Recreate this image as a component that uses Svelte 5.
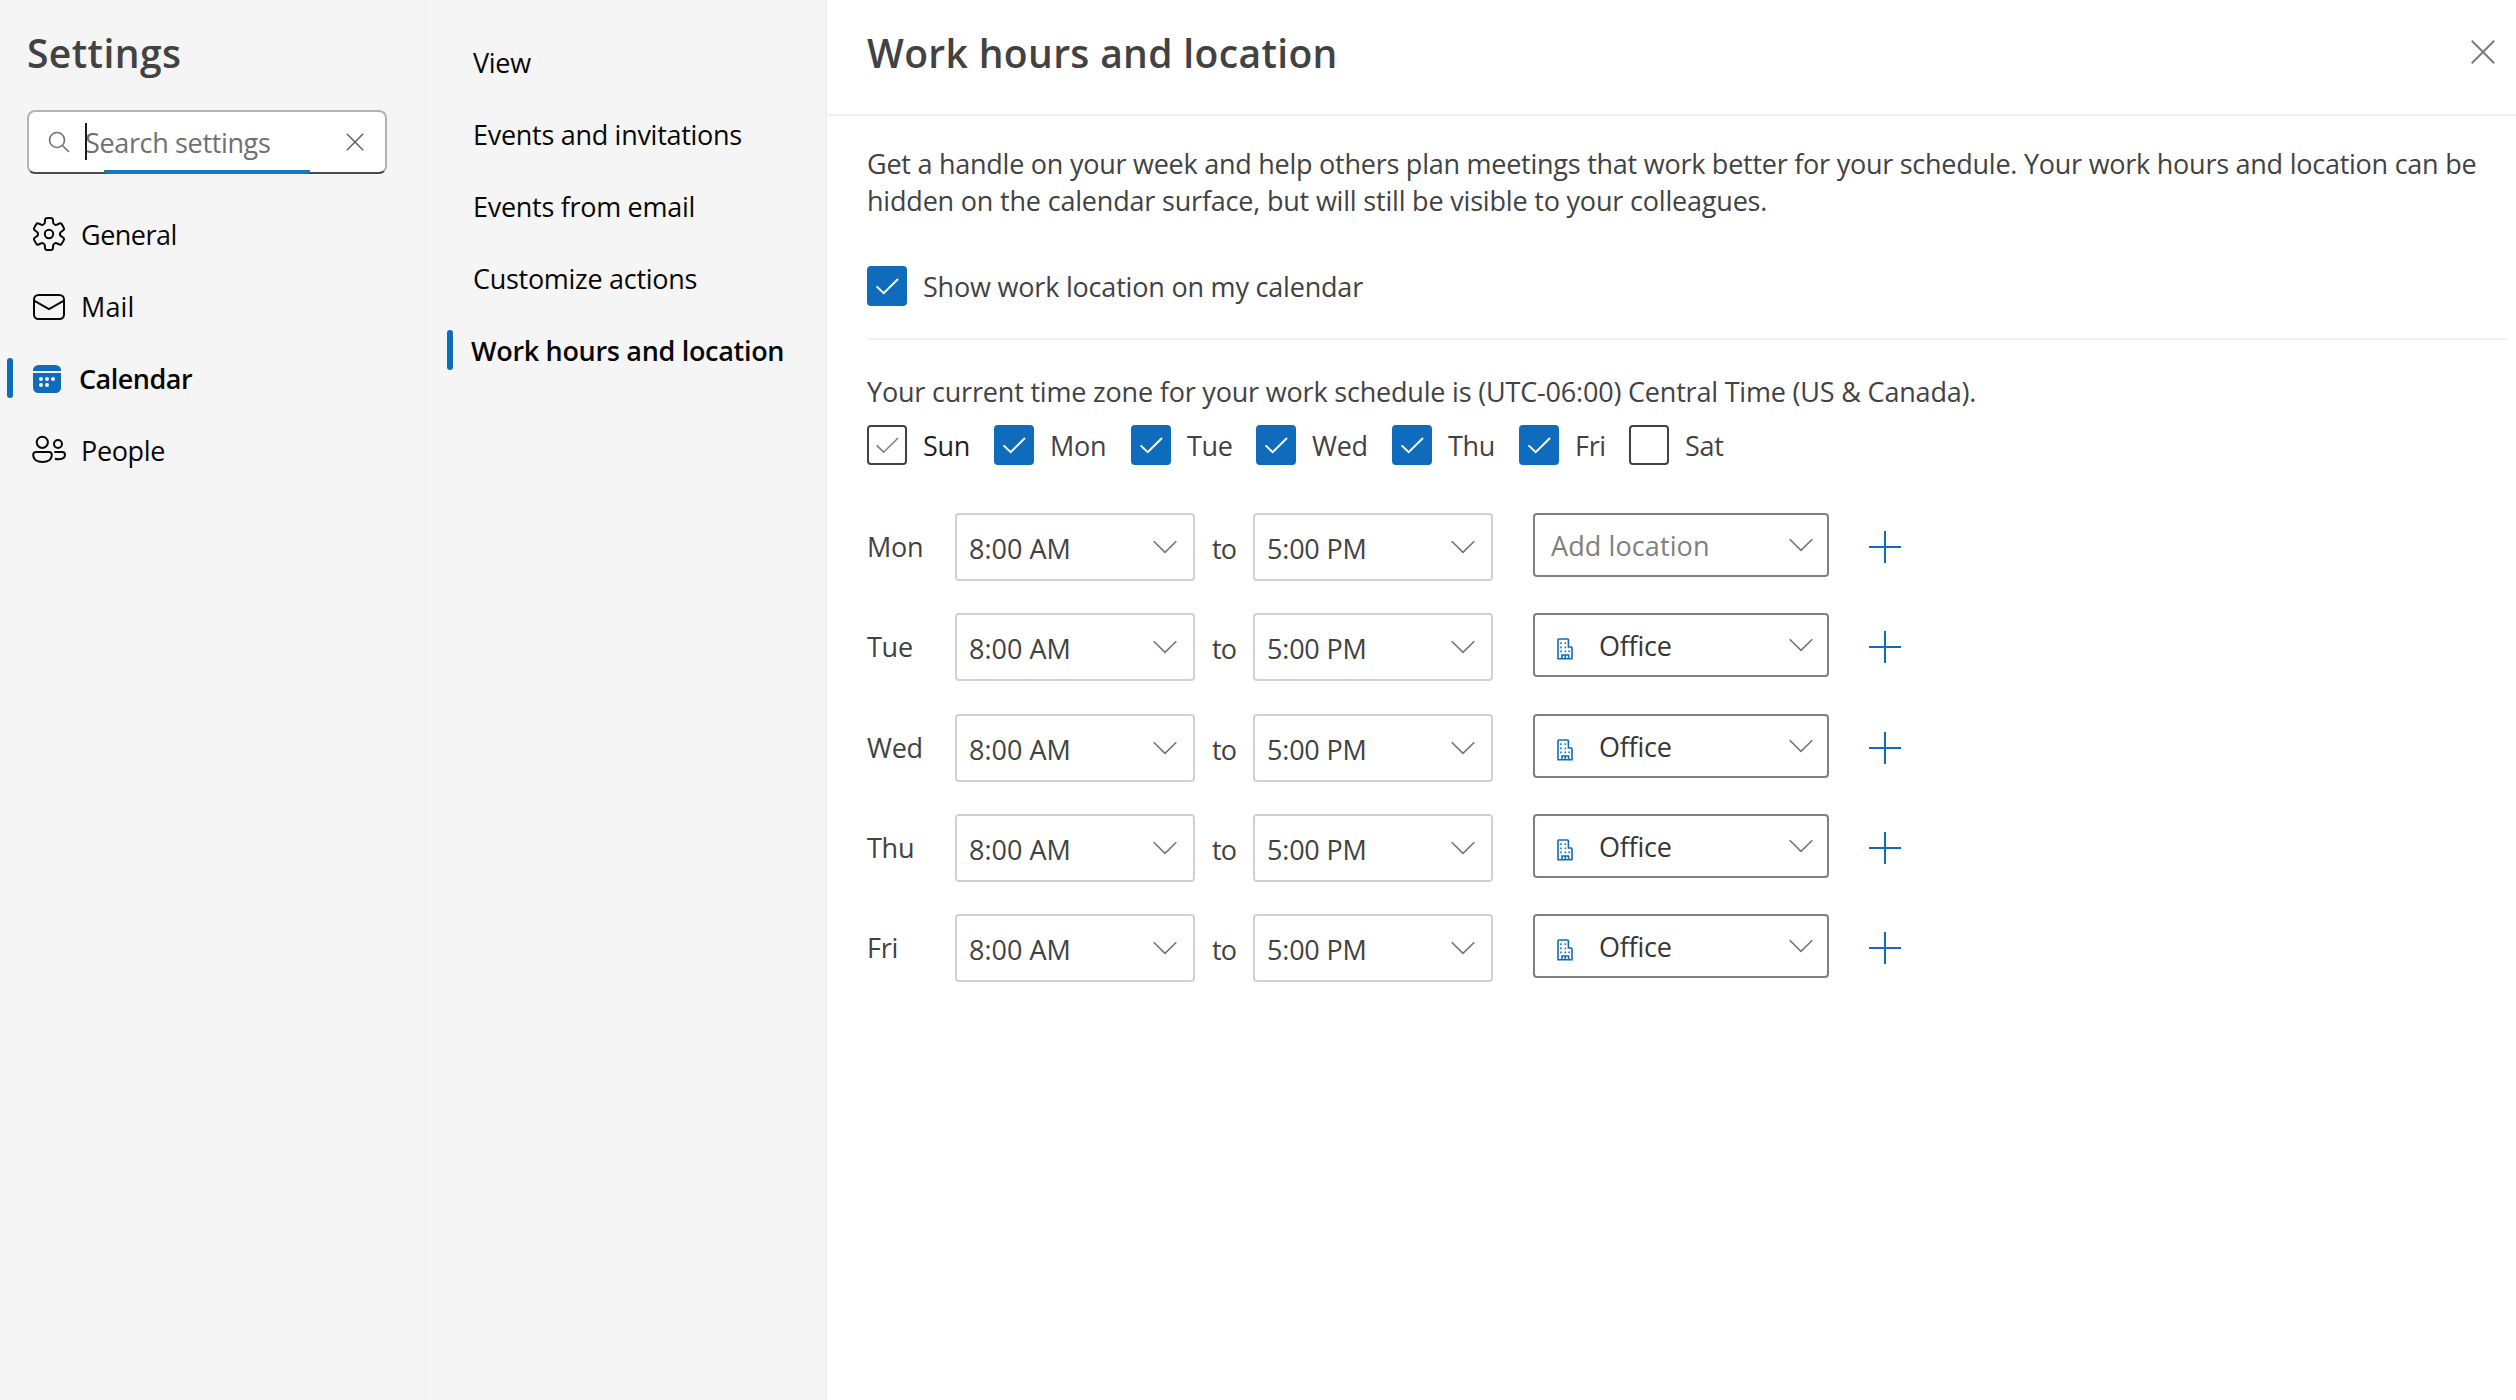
<script>
  const sections = [
    { label: 'General', icon: 'gear' },
    { label: 'Mail', icon: 'mail' },
    { label: 'Calendar', icon: 'calendar', active: true },
    { label: 'People', icon: 'people' }
  ];
  const pages = [
    { label: 'View' },
    { label: 'Events and invitations' },
    { label: 'Events from email' },
    { label: 'Customize actions' },
    { label: 'Work hours and location', active: true }
  ];
  const days = [
    { name: 'Sun', state: 'hover' },
    { name: 'Mon', state: 'on' },
    { name: 'Tue', state: 'on' },
    { name: 'Wed', state: 'on' },
    { name: 'Thu', state: 'on' },
    { name: 'Fri', state: 'on' },
    { name: 'Sat', state: 'off' }
  ];
  const schedule = [
    { day: 'Mon', location: null },
    { day: 'Tue', location: 'Office' },
    { day: 'Wed', location: 'Office' },
    { day: 'Thu', location: 'Office' },
    { day: 'Fri', location: 'Office' }
  ];

  // Six-toothed gear centred in a 34x34 box.
  function gearPath() {
    const at = (deg, r) => {
      const a = ((deg - 90) * Math.PI) / 180;
      return `${(17 + r * Math.cos(a)).toFixed(2)} ${(17 + r * Math.sin(a)).toFixed(2)}`;
    };
    let d = `M${at(-11, 16)}`;
    for (let k = 0; k < 360; k += 60) {
      d += `Q${at(k, 16.3)} ${at(k + 11, 16)}Q${at(k + 15, 15.6)} ${at(k + 16, 14.5)}`;
      d += `L${at(k + 19, 12.6)}Q${at(k + 22, 10.8)} ${at(k + 30, 11.1)}Q${at(k + 38, 10.8)} ${at(k + 41, 12.6)}`;
      d += `L${at(k + 44, 14.5)}Q${at(k + 45, 15.6)} ${at(k + 49, 16)}`;
    }
    return d + 'Z';
  }
  const gear = gearPath();
</script>

{#snippet check()}
  <svg class="tick" viewBox="0 0 40 40"><path d="M9.6 20.4 16.7 27.2 31 13" /></svg>
{/snippet}

{#snippet chevron()}
  <svg class="chevron" viewBox="0 0 24 14"><path d="M.7 1.2 12 12.4 23.3 1.2" /></svg>
{/snippet}

<div class="app">
  <aside class="sections">
    <h1>Settings</h1>
    <div class="search">
      <svg class="lens" viewBox="0 0 22 22"><circle cx="9" cy="9" r="7.5" /><path d="M14.2 14.2 21 21" /></svg>
      <span class="field"><i class="caret"></i>Search settings</span>
      <svg class="clear" viewBox="0 0 18 18"><path d="M.8.8 17.2 17.2M17.2.8.8 17.2" /></svg>
      <span class="focus"></span>
    </div>
    <nav>
      {#each sections as s}
        <a class="row {s.icon}" class:active={s.active}>
          <svg class="icon" viewBox="0 0 34 34">
            {#if s.icon === 'gear'}
              <path d={gear} /><circle cx="17" cy="17" r="4.2" />
            {:else if s.icon === 'mail'}
              <rect x="2" y="5" width="30" height="24" rx="4.5" /><path d="M2.5 10.8 17 19 31.5 10.8" />
            {:else if s.icon === 'calendar'}
              <path class="solid" d="M1 7V6.5A5.5 5.5 0 0 1 6.5 1H23.5A5.5 5.5 0 0 1 29 6.5V7ZM1 9H29V23.5A5.5 5.5 0 0 1 23.5 29H6.5A5.5 5.5 0 0 1 1 23.5Z" />
              {#each [[9, 15], [15, 15], [21, 15], [9, 21], [15, 21]] as [x, y]}
                <circle class="hole" cx={x} cy={y} r="2" />
              {/each}
            {:else}
              <circle cx="10.3" cy="9.3" r="5.6" /><circle cx="26" cy="11" r="4" />
              <path d="M4 19H17a2.8 2.8 0 0 1 2.8 2.8C19.8 26.5 16 29 10.5 29S1.2 26.5 1.2 21.8A2.8 2.8 0 0 1 4 19ZM22.3 19H30.2a2.8 2.8 0 0 1 2.8 2.8C33 25 30 26.2 26.8 26.2 25.2 26.2 24 26 22.9 25.7" />
            {/if}
          </svg>
          <span>{s.label}</span>
        </a>
      {/each}
    </nav>
  </aside>

  <nav class="pages">
    {#each pages as p}
      <a class="row" class:active={p.active}>{p.label}</a>
    {/each}
  </nav>

  <main>
    <header>
      <h1>Work hours and location</h1>
      <svg class="close" viewBox="0 0 24 24"><path d="M.8.8 23.2 23.2M23.2.8.8 23.2" /></svg>
    </header>
    <div class="body">
      <p class="intro">
        <span>Get a handle on your week and help others plan meetings that work better for your schedule. Your work hours and location can be</span>
        <span class="second">hidden on the calendar surface, but will still be visible to your colleagues.</span>
      </p>
      <label class="option show"><span class="box on">{@render check()}</span>Show work location on my calendar</label>
      <p class="zone">Your current time zone for your work schedule is (UTC-06:00) Central Time (US &amp; Canada).</p>
      <div class="days">
        {#each days as d}
          <label class="option {d.state}">
            <span class="box {d.state}">{#if d.state !== 'off'}{@render check()}{/if}</span>{d.name}
          </label>
        {/each}
      </div>
      <div class="schedule">
        {#each schedule as r}
          <div class="entry">
            <span class="day">{r.day}</span>
            <div class="select time"><span>8:00 AM</span>{@render chevron()}</div>
            <span class="to">to</span>
            <div class="select time pm"><span>5:00 PM</span>{@render chevron()}</div>
            <div class="select place" class:empty={!r.location}>
              {#if r.location}
                <svg class="office" viewBox="0 0 16 22">
                  <path d="M1 20.8V1.8Q1 1 1.8 1H10.6Q11.4 1 11.4 1.8V9H14.2Q15 9 15 9.8V20.8ZM5 20.8V17H11.6V20.8M8.3 17V20.8" />
                  <path class="dots" d="M3.2 5.2h1.5M7.6 5.2h1.5M3.2 9.3h1.5M7.6 9.3h1.5M3.2 13.4h1.5M7.6 13.4h1.5M11.4 13.4h1.5" />
                </svg>
              {/if}
              <span>{r.location ?? 'Add location'}</span>{@render chevron()}
            </div>
            <svg class="plus" viewBox="0 0 32 32"><path d="M16 0V32M0 16H32" /></svg>
          </div>
        {/each}
      </div>
    </div>
  </main>
</div>

<style>
  :global(body) { margin: 0; background: #fff; }
  .app {
    display: grid;
    grid-template-columns: 427px 400px 1fr;
    height: 1400px;
    font: 27px/37px "Open Sans", "Noto Sans", sans-serif;
    letter-spacing: -0.25px;
    color: #424242;
  }
  svg { display: block; flex: none; fill: none; stroke: currentColor; stroke-width: 2; }
  h1, p { margin: 0; }
  h1 { font-size: 39px; line-height: 52px; font-weight: 600; letter-spacing: 0.35px; }

  .sections, .pages { box-sizing: border-box; background: #f5f5f5; border-right: 2px solid #f0f0f0; }
  .sections { padding: 27px 38px 0 0; }
  .sections h1 { padding-left: 27px; letter-spacing: 0.42px; }
  .search {
    position: relative;
    box-sizing: border-box;
    display: flex;
    align-items: center;
    height: 64px;
    margin: 31px 0 24px 27px;
    padding: 0 21px 0 19px;
    width: 360px;
    background: #fff;
    border: 2px solid #b3b3b3;
    border-bottom-color: #4a4a4a;
    border-radius: 8px;
    color: #707070;
  }
  .lens { width: 22px; height: 22px; stroke-width: 1.6; }
  .field { position: relative; flex: 1; margin-left: 15px; padding-top: 1px; letter-spacing: -0.35px; }
  .caret { position: absolute; left: 0; top: 0; width: 2px; height: 37px; background: #1b1b1b; }
  .clear { width: 18px; height: 18px; stroke-width: 1.5; color: #616161; }
  .focus {
    position: absolute;
    left: 75px;
    bottom: -2px;
    width: 206px;
    height: 4px;
    background: #1a75c9;
    border-radius: 0 0 4px 4px / 0 0 3px 3px;
  }

  .row { position: relative; display: flex; align-items: center; height: 72px; color: #080808; }
  .sections .row { padding-left: 32px; letter-spacing: -0.5px; }
  .icon { width: 34px; height: 34px; margin-right: 15px; }
  .mail .icon { margin: 1px 15px 0 0; }
  .sections .row.mail { letter-spacing: 0.1px; }
  .row.calendar .icon { margin: 6px 13px 0 0; color: #0f6cbd; }
  .sections .row.people { letter-spacing: -0.35px; }
  .solid { fill: currentColor; stroke: none; }
  .hole { fill: #f5f5f5; stroke: none; }
  .active { font-weight: 600; }
  .active::before {
    content: "";
    position: absolute;
    left: 7px;
    top: 16px;
    width: 6px;
    height: 40px;
    border-radius: 3px;
    background: #0f6cbd;
  }
  .pages { padding: 26px 0 0 20px; }
  .pages .row { padding-left: 26px; letter-spacing: -0.29px; }
  .pages .row.active { padding-left: 24px; letter-spacing: -0.31px; }
  .pages .active::before { left: 0; }

  header {
    box-sizing: border-box;
    display: flex;
    justify-content: space-between;
    height: 116px;
    padding: 27px 21px 0 40px;
    border-bottom: 2px solid #f0f0f0;
  }
  .close { width: 24px; height: 24px; margin-top: 13px; color: #7b7b7b; }
  .body { padding: 29px 9px 0 40px; }
  .intro span { display: block; white-space: nowrap; }
  .intro .second { letter-spacing: -0.19px; }
  .option { display: flex; align-items: center; gap: 16px; }
  .show { height: 40px; padding: 47px 0 32px; border-bottom: 2px solid #f0f0f0; letter-spacing: -0.2px; }
  .box { box-sizing: border-box; display: grid; width: 40px; height: 40px; flex: none; border: 2px solid #424242; border-radius: 4px; }
  .box.on { background: #0f6cbd; border-color: #0f6cbd; color: #fff; }
  .box.hover { color: #808080; }
  .tick { width: 40px; height: 40px; margin: -2px; }
  .box.hover .tick { stroke-width: 1.6; }
  .zone { padding-top: 33px; letter-spacing: -0.19px; }
  .days { display: grid; grid-template-columns: 127px 137px 125px 136px 127px 110px 100px; margin-top: 15px; letter-spacing: -0.3px; }
  .option.hover { color: #1f1f1f; }

  .schedule { display: grid; grid-auto-rows: 100.3px; margin-top: 48px; }
  .entry { display: grid; grid-template-columns: 88px 240px 58px 240px 296px 32px; align-items: start; }
  .day { line-height: 67px; }
  .to { line-height: 71px; padding-left: 17px; letter-spacing: -0.8px; }
  .select {
    box-sizing: border-box;
    display: flex;
    align-items: center;
    justify-content: space-between;
    border: 2px solid #d1d1d1;
    border-radius: 4px;
  }
  .time { height: 68px; padding: 0 16px 0 12px; }
  .time span { padding-top: 3px; letter-spacing: 0; }
  .pm span { letter-spacing: -0.2px; }
  .place { height: 64px; margin-left: 40px; padding: 0 14px 0 16px; width: 296px; border-color: #808080; }
  .place span { flex: 1; padding-top: 1px; }
  .entry .place { color: #363636; }
  .entry .place.empty span { color: #808080; letter-spacing: 0.1px; }
  .office { width: 16px; height: 22px; margin: 8px 26px 0 6px; color: #0f6cbd; stroke-width: 1.6; }
  .dots { stroke-width: 1.8; }
  .chevron { width: 24px; height: 14px; stroke-width: 1.6; color: #757575; }
  .plus { width: 32px; height: 32px; margin: 18px 0 0 80px; color: #0f6cbd; }
</style>
